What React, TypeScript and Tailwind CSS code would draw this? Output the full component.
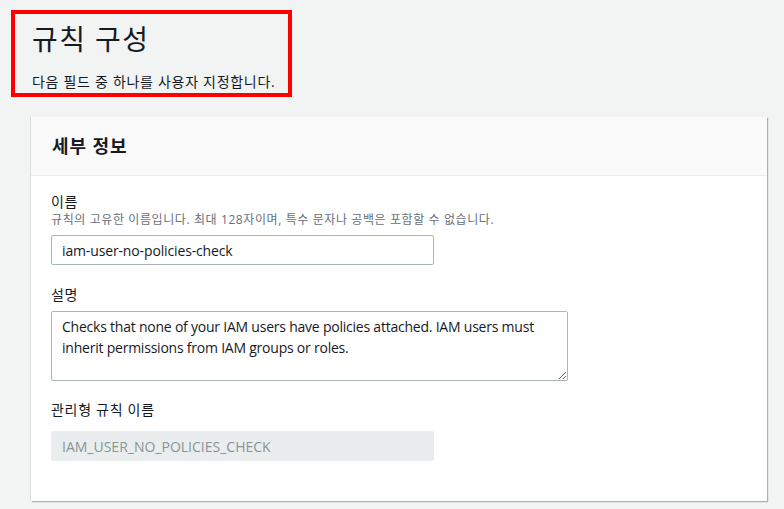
import React from "react";

const font = { fontFamily: '"Open Sans", "Noto Sans CJK KR", sans-serif' };

export default function App() {
  return (
    <div
      className="w-[784px] h-[509px] bg-[#f2f3f3] overflow-hidden text-[#16191f]"
      style={font}
    >
      <div className="pt-[10px] pl-[11px]">
        <div className="w-[281px] h-[87px] border-4 border-[#ff0000] pl-[17px] pt-[5px]">
          <h1 className="text-[28px] leading-[40px] font-normal tracking-[0.05em] text-[#16191f]">규칙 구성</h1>
          <p className="text-[14px] leading-[20px] mt-[13px] tracking-[0.05em]">다음 필드 중 하나를 사용자 지정합니다.</p>
        </div>
      </div>
      <div className="ml-[31px] mt-[20px] w-[736px] h-[384px] bg-white shadow-[1px_1px_1px_rgba(0,28,36,0.3),-1px_0_0_rgba(0,28,36,0.1)] rounded-none">
        <div className="h-[59px] bg-[#fafafa] border-b border-[#eaeded] flex items-center pl-[21px]">
          <h2 className="text-[18px] font-bold leading-[24px] tracking-[0.05em]">세부 정보</h2>
        </div>
        <div className="pl-[20px] pt-[16px]">
          <div className="text-[14px] leading-[20px] tracking-[0.05em]">이름</div>
          <div className="text-[12px] leading-[16px] text-[#687078] tracking-[0.05em]">
            규칙의 고유한 이름입니다. 최대 128자이며, 특수 문자나 공백은 포함할 수 없습니다.
          </div>
          <input
            readOnly
            value="iam-user-no-policies-check"
            className="mt-[7px] w-[383px] h-[30px] border border-[#aab7b8] rounded-[2px] px-[10px] text-[14px] tracking-[-0.01em] text-[#16191f] outline-none"
            style={font}
          />
          <div className="text-[14px] leading-[20px] mt-[20px] tracking-[0.05em]">설명</div>
          <textarea
            readOnly
            value="Checks that none of your IAM users have policies attached. IAM users must inherit permissions from IAM groups or roles."
            className="block mt-[6px] w-[517px] h-[70px] border border-[#aab7b8] rounded-[2px] px-[10px] py-[4px] text-[14px] leading-[21px] tracking-[-0.016em] text-[#16191f] outline-none"
            style={font}
          />
          <div className="text-[14px] leading-[20px] mt-[19px] tracking-[0.05em]">관리형 규칙 이름</div>
          <input
            readOnly
            disabled
            value="IAM_USER_NO_POLICIES_CHECK"
            className="mt-[11px] w-[383px] h-[30px] bg-[#eaeded] rounded-[2px] px-[11px] text-[14px] text-[#879596] outline-none"
            style={font}
          />
        </div>
      </div>
    </div>
  );
}
